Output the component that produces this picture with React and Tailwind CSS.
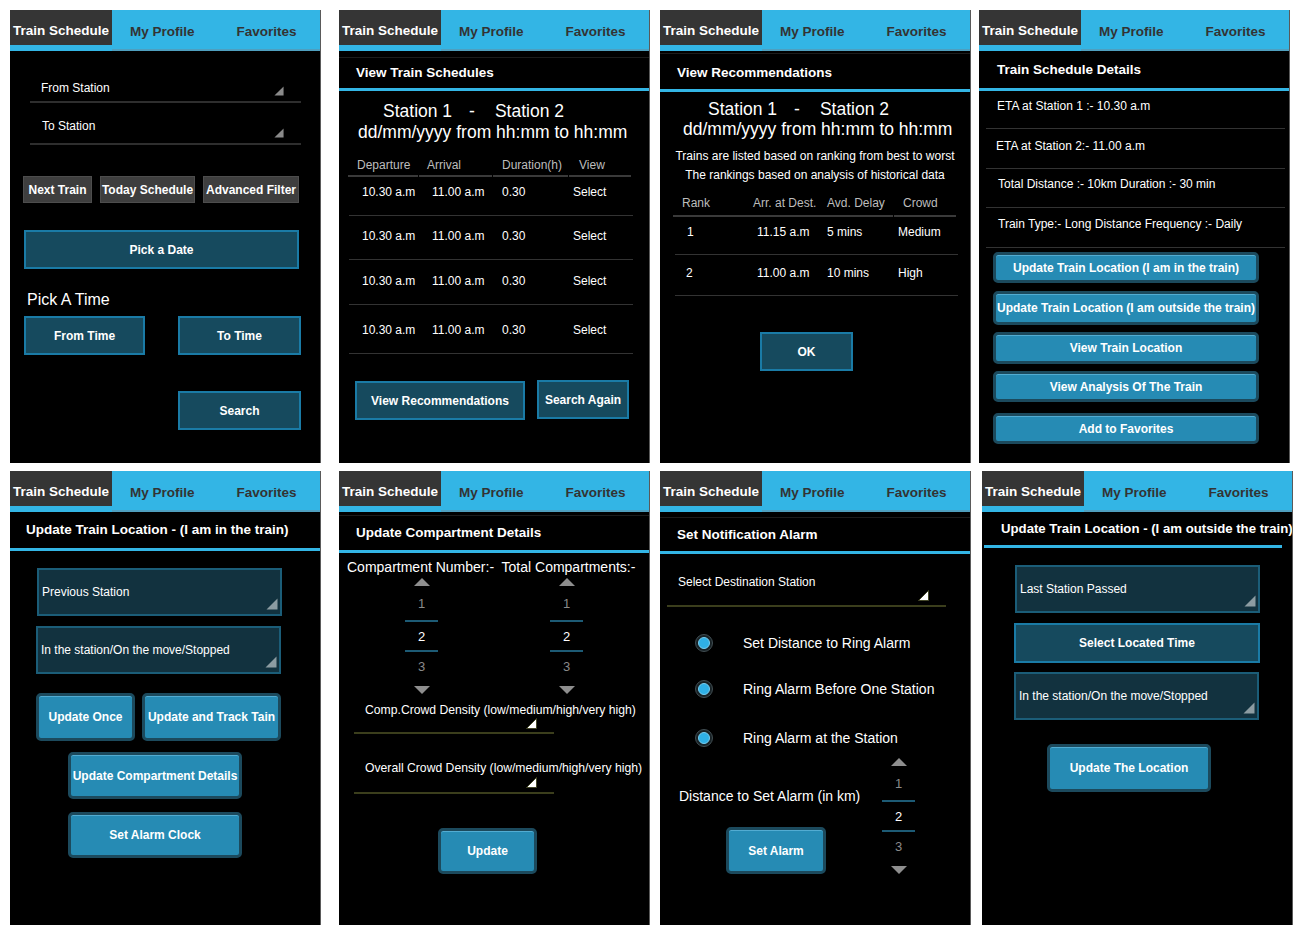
import React from "react";

const Tri = ({ size = 12, fill = "#8c9ca2", stroke = "none", className = "" }) => (
  <svg width={size} height={size} viewBox="0 0 12 12" className={className}>
    <polygon points="11.5,0.5 11.5,11.5 0.5,11.5" fill={fill} stroke={stroke} strokeWidth="1" />
  </svg>
);

const UpTri = ({ className = "" }) => (
  <svg width="16" height="8" viewBox="0 0 16 8" className={className}>
    <polygon points="8,0 16,8 0,8" fill="#8e8e8e" />
  </svg>
);

const DownTri = ({ className = "" }) => (
  <svg width="16" height="8" viewBox="0 0 16 8" className={className}>
    <polygon points="0,0 16,0 8,8" fill="#8e8e8e" />
  </svg>
);

const Tabs = () => (
  <div className="flex h-[41px] shrink-0 text-[13.5px] font-bold leading-[16px]">
    <div className="w-[102px] h-full bg-[#353535] border-b-[6px] border-[#33b5e5] flex items-center justify-center pt-[6px] text-white whitespace-nowrap">
      Train Schedule
    </div>
    <div className="flex-1 h-full bg-[#33b5e5] border-b-[2px] border-[#4f9fbf] flex items-center pt-[4px] text-[#333333] whitespace-nowrap">
      <span className="ml-[18px]">My Profile</span>
      <span className="ml-[42px]">Favorites</span>
    </div>
  </div>
);

const Panel = ({ cls, children }) => (
  <div className={`${cls} w-[311px] shrink-0 bg-black flex flex-col overflow-hidden text-white border-r border-r-[#5a5a5a]`}>
    <Tabs />
    {children}
  </div>
);

const darkBtn =
  "flex items-center justify-center bg-[#164a5e] border-2 border-[#1a7ba6] text-white font-bold text-[12px] leading-[16px] whitespace-nowrap";
const lightBtn =
  "flex items-center justify-center bg-[#268bb4] border-[3px] border-[#1c4a5d] rounded-[5px] shadow-[inset_0_1px_0_#52acd2] text-white font-bold text-[12px] leading-[16px] whitespace-nowrap";
const grayBtn =
  "flex items-center justify-center bg-[#3e3e3e] border border-[#4d4d4d] text-white font-bold text-[12px] leading-[16px] whitespace-nowrap";
const boxCls =
  "flex items-center justify-between bg-[#12323f] border-2 border-[#1b5d78] pl-[3px] text-[12px] leading-[16px] whitespace-nowrap";

const Picker = () => (
  <div className="w-[33px] flex flex-col items-center text-[13px] leading-[16px]">
    <UpTri className="mt-[2px]" />
    <span className="mt-[10px] text-[#8a8a8a]">1</span>
    <div className="mt-[8px] w-full h-[2px] bg-[#1d5b75]" />
    <span className="mt-[7px] text-white">2</span>
    <div className="mt-[5px] w-full h-[2px] bg-[#1d5b75]" />
    <span className="mt-[7px] text-[#8a8a8a]">3</span>
    <DownTri className="mt-[11px]" />
  </div>
);

const Radio = () => (
  <div className="w-[18px] h-[18px] rounded-full bg-[#182226] border border-[#414d52] flex items-center justify-center shrink-0">
    <div className="w-[12px] h-[12px] rounded-full bg-[#2fb0e6] border border-[#78cdef]" />
  </div>
);

function Panel1() {
  return (
    <Panel cls="ml-[10px] h-[453px]">
      <div className="ml-[20px] w-[271px] mt-[19px] h-[33px] border-b-2 border-[#2e2e2e] flex justify-between pl-[11px] pr-[17px] pt-[10px] text-[12px] leading-[16px]">
        <span>From Station</span>
        <Tri size={10} fill="#8a8a8a" className="self-end mb-[5px]" />
      </div>
      <div className="ml-[20px] w-[271px] mt-[7px] h-[35px] border-b-2 border-[#2e2e2e] flex justify-between pl-[12px] pr-[17px] pt-[8px] text-[12px] leading-[16px]">
        <span>To Station</span>
        <Tri size={10} fill="#8a8a8a" className="self-end mb-[5px]" />
      </div>
      <div className="flex ml-[13px] mt-[31px] gap-[8px] h-[27px]">
        <div className={`${grayBtn} w-[69px]`}>Next Train</div>
        <div className={`${grayBtn} w-[95px]`}>Today Schedule</div>
        <div className={`${grayBtn} w-[96px]`}>Advanced Filter</div>
      </div>
      <div className={`${darkBtn} ml-[14px] mt-[27px] w-[275px] h-[39px]`}>Pick a Date</div>
      <div className="ml-[17px] mt-[21px] text-[16px] leading-[20px]">Pick A Time</div>
      <div className="flex mt-[6px] ml-[14px] h-[39px]">
        <div className={`${darkBtn} w-[121px]`}>From Time</div>
        <div className={`${darkBtn} ml-[33px] w-[123px]`}>To Time</div>
      </div>
      <div className={`${darkBtn} ml-[168px] mt-[36px] w-[123px] h-[39px]`}>Search</div>
    </Panel>
  );
}

function Panel2() {
  const rows = [
    "h-[39px] pt-[7px]",
    "h-[44px] pt-[12px]",
    "h-[45px] pt-[13px]",
    "h-[49px] pt-[17px]",
  ];
  return (
    <Panel cls="ml-[18px] h-[453px]">
      <div className="mt-[6px] h-[34px] border-t border-t-[#1c1c1c] border-b-[3px] border-b-[#33b5e5] flex items-center pl-[17px] font-bold text-[13.5px] leading-[16px]">
        View Train Schedules
      </div>
      <div className="mt-[10px] pl-[44px] flex text-[17.5px] leading-[21px] whitespace-nowrap">
        <span>Station 1</span>
        <span className="ml-[17px]">-</span>
        <span className="ml-[20px]">Station 2</span>
      </div>
      <div className="pl-[19px] text-[17.5px] leading-[21px] whitespace-nowrap">dd/mm/yyyy from hh:mm to hh:mm</div>
      <div className="flex ml-[9px] mt-[14px] text-[12px] leading-[16px] text-[#bdbdbd] whitespace-nowrap">
        <div className="w-[70px] h-[20px] border-b-2 border-[#3a3a3a] pl-[9px]">Departure</div>
        <div className="ml-[1px] w-[73px] h-[20px] border-b-2 border-[#3a3a3a] pl-[8px]">Arrival</div>
        <div className="ml-[1px] w-[75px] h-[20px] border-b-2 border-[#3a3a3a] pl-[9px]">Duration(h)</div>
        <div className="ml-[1px] w-[62px] h-[20px] border-b-2 border-[#3a3a3a] pl-[10px]">View</div>
      </div>
      {rows.map((r, i) => (
        <div key={i} className={`flex ml-[10px] w-[284px] border-b border-[#333333] pl-[13px] text-[12px] leading-[16px] whitespace-nowrap ${r}`}>
          <span className="w-[70px]">10.30 a.m</span>
          <span className="w-[70px]">11.00 a.m</span>
          <span className="w-[71px]">0.30</span>
          <span>Select</span>
        </div>
      ))}
      <div className="flex mt-[27px] ml-[16px]">
        <div className={`${darkBtn} w-[170px] h-[39px]`}>View Recommendations</div>
        <div className={`${darkBtn} ml-[12px] w-[92px] h-[39px] -mt-[1px]`}>Search Again</div>
      </div>
    </Panel>
  );
}

function Panel3() {
  return (
    <Panel cls="ml-[10px] h-[453px]">
      <div className="mt-[2px] h-[39px] border-t border-t-[#1c1c1c] border-b-[3px] border-b-[#33b5e5] flex items-center pl-[17px] pt-[3px] font-bold text-[13.5px] leading-[16px]">
        View Recommendations
      </div>
      <div className="mt-[7px] pl-[48px] flex text-[17.5px] leading-[20px] whitespace-nowrap">
        <span>Station 1</span>
        <span className="ml-[17px]">-</span>
        <span className="ml-[20px]">Station 2</span>
      </div>
      <div className="pl-[23px] text-[17.5px] leading-[20px] whitespace-nowrap">dd/mm/yyyy from hh:mm to hh:mm</div>
      <div className="mt-[8px] text-center text-[12px] leading-[19px] whitespace-nowrap">
        <div>Trains are listed based on ranking from best to worst</div>
        <div>The rankings based on analysis of historical data</div>
      </div>
      <div className="flex ml-[13px] mt-[10px] text-[12px] leading-[16px] text-[#bdbdbd] whitespace-nowrap">
        <div className="w-[220px] h-[22px] border-b-2 border-[#3a3a3a] pl-[9px] flex">
          <span className="w-[71px]">Rank</span>
          <span className="w-[74px]">Arr. at Dest.</span>
          <span>Avd. Delay</span>
        </div>
        <div className="ml-[1px] w-[62px] h-[22px] border-b-2 border-[#3a3a3a] pl-[9px]">Crowd</div>
      </div>
      <div className="flex ml-[15px] w-[283px] border-b border-[#333333] pl-[12px] h-[38px] pt-[7px] text-[12px] leading-[16px] whitespace-nowrap">
        <span className="w-[70px]">1</span>
        <span className="w-[70px]">11.15 a.m</span>
        <span className="w-[71px]">5 mins</span>
        <span>Medium</span>
      </div>
      <div className="flex ml-[15px] w-[283px] border-b border-[#333333] pl-[11px] h-[41px] pt-[10px] text-[12px] leading-[16px] whitespace-nowrap">
        <span className="w-[71px]">2</span>
        <span className="w-[70px]">11.00 a.m</span>
        <span className="w-[71px]">10 mins</span>
        <span>High</span>
      </div>
      <div className={`${darkBtn} mt-[36px] ml-[100px] w-[93px] h-[39px]`}>OK</div>
    </Panel>
  );
}

function Panel4() {
  const rows = [
    ["h-[38px] pt-[7px] pl-[11px]", "ETA at Station 1 :- 10.30 a.m"],
    ["h-[40px] pt-[9px] pl-[10px]", "ETA at Station 2:- 11.00 a.m"],
    ["h-[39px] pt-[7px] pl-[12px]", "Total Distance :- 10km Duration :- 30 min"],
    ["h-[40px] pt-[8px] pl-[12px]", "Train Type:- Long Distance Frequency :- Daily"],
  ];
  const btns = [
    ["mt-[4px] h-[31px]", "Update Train Location (I am in the train)"],
    ["mt-[8px] h-[34px]", "Update Train Location (I am outside the train)"],
    ["mt-[7px] h-[32px]", "View Train Location"],
    ["mt-[7px] h-[31px]", "View Analysis Of The Train"],
    ["mt-[11px] h-[31px]", "Add to Favorites"],
  ];
  return (
    <Panel cls="ml-[8px] h-[453px]">
      <div className="h-[40px] border-b-[3px] border-b-[#33b5e5] flex items-center pl-[18px] font-bold text-[13.5px] leading-[16px]">
        Train Schedule Details
      </div>
      {rows.map(([c, t], i) => (
        <div key={i} className={`ml-[7px] w-[299px] border-b border-[#333333] text-[12px] leading-[16px] whitespace-nowrap ${c}`}>
          {t}
        </div>
      ))}
      {btns.map(([c, t], i) => (
        <div key={i} className={`${lightBtn} ml-[14px] w-[266px] ${c}`}>
          {t}
        </div>
      ))}
    </Panel>
  );
}

function Panel5() {
  return (
    <Panel cls="ml-[10px] h-[454px]">
      <div className="h-[39px] border-b-[3px] border-b-[#33b5e5] flex items-center pl-[16px] font-bold text-[13.5px] leading-[16px] whitespace-nowrap">
        Update Train Location - (I am in the train)
      </div>
      <div className={`${boxCls} ml-[27px] mt-[17px] w-[245px] h-[48px]`}>
        <span>Previous Station</span>
        <Tri size={12} className="self-end mb-[4px] mr-[2px]" />
      </div>
      <div className={`${boxCls} ml-[26px] mt-[10px] w-[245px] h-[48px]`}>
        <span>In the station/On the move/Stopped</span>
        <Tri size={12} className="self-end mb-[4px] mr-[2px]" />
      </div>
      <div className="flex ml-[26px] mt-[19px] h-[48px]">
        <div className={`${lightBtn} w-[99px]`}>Update Once</div>
        <div className={`${lightBtn} ml-[7px] w-[139px]`}>Update and Track Tain</div>
      </div>
      <div className={`${lightBtn} ml-[58px] mt-[11px] w-[174px] h-[47px]`}>Update Compartment Details</div>
      <div className={`${lightBtn} ml-[58px] mt-[13px] w-[174px] h-[46px]`}>Set Alarm Clock</div>
    </Panel>
  );
}

function Panel6() {
  return (
    <Panel cls="ml-[18px] h-[454px]">
      <div className="mt-[3px] h-[38px] border-t border-t-[#1c1c1c] border-b-[3px] border-b-[#33b5e5] flex items-center pl-[17px] font-bold text-[13.5px] leading-[16px] whitespace-nowrap">
        Update Compartment Details
      </div>
      <div className="mt-[5px] pl-[8px] text-[14px] leading-[18px] whitespace-pre">Compartment Number:-  Total Compartments:-</div>
      <div className="flex ml-[66px]">
        <Picker />
        <div className="ml-[112px]">
          <Picker />
        </div>
      </div>
      <div className="ml-[15px] w-[200px] mt-[8px] flex flex-col border-b-2 border-[#3b3e1c]">
        <span className="pl-[11px] text-[12.2px] leading-[16px] whitespace-nowrap">Comp.Crowd Density (low/medium/high/very high)</span>
        <Tri size={11} fill="#ffffff" stroke="#3b3e1c" className="self-end mr-[17px] mb-[3px]" />
      </div>
      <div className="ml-[15px] w-[200px] mt-[26px] flex flex-col border-b-2 border-[#3b3e1c]">
        <span className="pl-[11px] text-[12.2px] leading-[16px] whitespace-nowrap">Overall Crowd Density (low/medium/high/very high)</span>
        <Tri size={11} fill="#ffffff" stroke="#3b3e1c" className="self-end mr-[17px] mt-[1px] mb-[4px]" />
      </div>
      <div className={`${lightBtn} ml-[99px] mt-[34px] w-[99px] h-[46px]`}>Update</div>
    </Panel>
  );
}

function Panel7() {
  const radios = [
    ["mt-[26px]", "Set Distance to Ring Alarm"],
    ["mt-[26px]", "Ring Alarm Before One Station"],
    ["mt-[29px]", "Ring Alarm at the Station"],
  ];
  return (
    <Panel cls="ml-[10px] h-[454px]">
      <div className="mt-[5px] h-[37px] border-t border-t-[#1c1c1c] border-b-[3px] border-b-[#33b5e5] flex items-center pl-[17px] font-bold text-[13.5px] leading-[16px] whitespace-nowrap">
        Set Notification Alarm
      </div>
      <div className="ml-[7px] w-[279px] mt-[20px] flex flex-col border-b-2 border-[#3b3e1c]">
        <span className="pl-[11px] text-[12px] leading-[16px] whitespace-nowrap">Select Destination Station</span>
        <Tri size={11} fill="#ffffff" stroke="#3b3e1c" className="self-end mr-[17px] mb-[4px]" />
      </div>
      {radios.map(([c, t], i) => (
        <div key={i} className={`flex items-center h-[20px] ml-[35px] ${c}`}>
          <Radio />
          <span className="ml-[30px] text-[14px] leading-[18px] whitespace-nowrap">{t}</span>
        </div>
      ))}
      <div className="flex mt-[8px]">
        <div className="w-[222px] flex flex-col">
          <span className="mt-[31px] pl-[19px] text-[14px] leading-[18px] whitespace-nowrap">Distance to Set Alarm (in km)</span>
          <div className={`${lightBtn} ml-[66px] mt-[22px] w-[100px] h-[47px]`}>Set Alarm</div>
        </div>
        <Picker />
      </div>
    </Panel>
  );
}

function Panel8() {
  return (
    <Panel cls="ml-[11px] h-[454px]">
      <div className="ml-[2px] w-[298px] h-[36px] border-b-[3px] border-b-[#33b5e5] flex items-center pl-[17px] font-bold text-[13.2px] leading-[16px] whitespace-nowrap">
        Update Train Location - (I am outside the train)
      </div>
      <div className={`${boxCls} ml-[33px] mt-[17px] w-[245px] h-[48px]`}>
        <span>Last Station Passed</span>
        <Tri size={12} className="self-end mb-[4px] mr-[2px]" />
      </div>
      <div className={`${darkBtn} ml-[32px] mt-[10px] w-[246px] h-[40px]`}>Select Located Time</div>
      <div className={`${boxCls} ml-[32px] mt-[9px] w-[245px] h-[48px]`}>
        <span>In the station/On the move/Stopped</span>
        <Tri size={12} className="self-end mb-[4px] mr-[2px]" />
      </div>
      <div className={`${lightBtn} ml-[65px] mt-[24px] w-[164px] h-[48px]`}>Update The Location</div>
    </Panel>
  );
}

export default function App() {
  return (
    <div className="w-[1300px] h-[936px] bg-white pt-[10px] overflow-hidden font-['Liberation_Sans',Arial,sans-serif]">
      <div className="flex h-[453px]">
        <Panel1 />
        <Panel2 />
        <Panel3 />
        <Panel4 />
      </div>
      <div className="flex h-[454px] mt-[8px]">
        <Panel5 />
        <Panel6 />
        <Panel7 />
        <Panel8 />
      </div>
    </div>
  );
}
